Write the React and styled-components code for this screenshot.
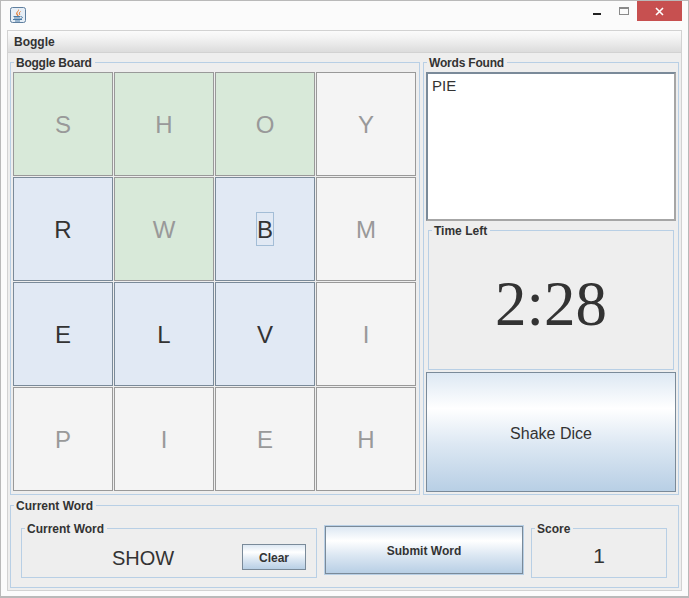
import * as React from "react";
import styled, { createGlobalStyle } from "styled-components";

const Global = createGlobalStyle`
  html, body {
    margin: 0;
    padding: 0;
    background: #fbfbfb;
  }
  * {
    box-sizing: border-box;
  }
`;

const Frame = styled.div`
  width: 689px;
  height: 598px;
  display: flex;
  flex-direction: column;
  background: #fbfbfb;
  border: 1px solid #b9b9b9;
  border-bottom-width: 2px;
  font-family: "Liberation Sans", Arial, sans-serif;
  color: #333333;
  overflow: hidden;
`;

const TitleBar = styled.div`
  height: 29px;
  flex: none;
  display: flex;
  align-items: flex-start;
  justify-content: space-between;
  padding-left: 9px;
`;

const AppIcon = styled.svg`
  width: 16px;
  height: 16px;
  margin-top: 6px;
`;

const WindowControls = styled.div`
  display: flex;
  align-items: flex-start;
  margin-right: 6px;
`;

const MinButton = styled.div`
  width: 8px;
  height: 2px;
  margin: 12px 18px 0 0;
  background: #222;
`;

const MaxButton = styled.div`
  width: 10px;
  height: 8px;
  margin: 6px 8px 0 0;
  border: 1px solid #8a8a8a;
  border-top-width: 2px;
`;

const CloseButton = styled.div`
  width: 45px;
  height: 20px;
  background: #c75050;
  display: flex;
  align-items: center;
  justify-content: center;
`;

const Content = styled.div`
  flex: 1;
  margin: 0 6px 5px 6px;
  border: 1px solid #d2d2d2;
  background: #eeeeee;
  display: flex;
  flex-direction: column;
  min-height: 0;
`;

const MenuBar = styled.div`
  height: 22px;
  flex: none;
  display: flex;
  align-items: center;
  padding-left: 6px;
  font-size: 12px;
  font-weight: bold;
  background: linear-gradient(#fbfbfb, #f4f4f4 30%, #dcdcdc);
  border-bottom: 1px solid #d2d2d2;
`;

const Body = styled.div`
  flex: 1;
  padding: 3px 2px 2px 2px;
  display: flex;
  flex-direction: column;
  gap: 4px;
  min-height: 0;
`;

const TopRow = styled.div`
  display: flex;
  gap: 3px;
`;

const Group = styled.fieldset`
  margin: 0;
  min-width: 0;
  border: 1px solid #b8cfe5;
  padding: ${(p) => p.$pad || "0"};
  width: ${(p) => p.$width || "auto"};
  flex: ${(p) => p.$flex || "none"};
`;

const Legend = styled.legend`
  margin-left: ${(p) => p.$offset || "3px"};
  padding: 1px 3px 0 2px;
  font-size: 12px;
  line-height: 12px;
  font-weight: bold;
  letter-spacing: ${(p) => p.$tight || "normal"};
`;

const Board = styled.div`
  display: grid;
  grid-template-columns: repeat(4, 100px);
  grid-auto-rows: 104px;
  gap: 1px;
`;

const Die = styled.div`
  display: flex;
  align-items: center;
  justify-content: center;
  padding-top: 2px;
  font-size: 24px;
  border: 1px solid ${(p) => (p.$state === "open" ? "#7a8a99" : "#999999")};
  color: ${(p) => (p.$state === "open" ? "#333333" : "#999999")};
  background: ${(p) =>
    p.$state === "open"
      ? "#e1e9f4"
      : p.$state === "used"
        ? "#d8e9d9"
        : "#f4f4f4"};
`;

const DieFocus = styled.span`
  display: block;
  margin-top: -2px;
  padding-top: 2px;
  line-height: 30px;
  border: 1px solid #a3bdd6;
`;

const SideColumn = styled.div`
  display: flex;
  flex-direction: column;
  align-items: center;
`;

const WordList = styled.div`
  width: 250px;
  height: 149px;
  padding: 2px 4px;
  font-size: 15px;
  line-height: 20px;
  background: #ffffff;
  border: 2px solid #7a8a99;
  border-right-color: #a6a6a6;
  border-bottom-color: #a6a6a6;
`;

const TimeGroup = styled(Group)`
  margin-top: 3px;
`;

const Clock = styled.div`
  height: 132px;
  display: flex;
  align-items: center;
  justify-content: center;
  padding-top: 3px;
  font-family: "Liberation Serif", "Times New Roman", serif;
  font-size: 63px;
`;

const GlossButton = styled.button`
  display: block;
  font-family: inherit;
  color: #333333;
  padding: ${(p) => p.$top || "2px"} 0 0;
  background: linear-gradient(#dde8f3, #ffffff 30%, #dde8f3 60%, #b8cfe5);
  border: 1px solid #7a8a99;
  width: ${(p) => p.$width};
  height: ${(p) => p.$height};
  font-size: ${(p) => p.$size};
  font-weight: ${(p) => p.$weight || "normal"};
  flex: none;
`;

const ShakeButton = styled(GlossButton)`
  margin-top: 2px;
`;

const BottomGroup = styled(Group)`
  padding: 10px 11px 9px 10px;
`;

const BottomRow = styled.div`
  display: flex;
  align-items: flex-start;
  gap: 7px;
`;

const WordRow = styled.div`
  height: 42px;
  display: flex;
  align-items: flex-start;
  justify-content: space-between;
  padding: 0 10px 0 90px;
`;

const WordText = styled.div`
  font-size: 20px;
  line-height: 24px;
  margin-top: 11px;
`;

const ClearSlot = styled.div`
  margin-top: 9px;
`;

const SubmitWrap = styled.div`
  flex: none;
  margin-top: 3px;
  padding: 1px;
  background: #b8cfe5;
`;

const ScoreValue = styled.div`
  height: 42px;
  display: flex;
  justify-content: center;
  font-size: 21px;
  line-height: 24px;
  padding-top: 9px;
`;

const rows = [
  [["S", "used"], ["H", "used"], ["O", "used"], ["Y", "idle"]],
  [["R", "open"], ["W", "used"], ["B", "open", true], ["M", "idle"]],
  [["E", "open"], ["L", "open"], ["V", "open"], ["I", "idle"]],
  [["P", "idle"], ["I", "idle"], ["E", "idle"], ["H", "idle"]],
];

export default function App() {
  return (
    <>
      <Global />
      <Frame>
        <TitleBar>
          <AppIcon viewBox="0 0 16 16">
            <rect x="0.5" y="0.5" width="15" height="15" rx="2" fill="#e6eef6" stroke="#5f7f9f" />
            <path d="M8.5 2 C10 4 6.5 5 7.5 7 C8 8 9 8.5 8.5 9.5 C7 8.5 5.5 7 6.5 5.5 C7.2 4.4 8.6 3.6 8.5 2Z" fill="#e2701f" />
            <path d="M10.5 4.5 C9 5.5 9 7 10 8" fill="none" stroke="#e2701f" />
            <path d="M3.5 9.5 H10 M4 11 H10 M3 12.5 H12 M5 14 H10" stroke="#4a7aa5" />
            <path d="M10.5 9.5 C13 9.5 13 11.5 10.5 11.5" fill="none" stroke="#4a7aa5" />
          </AppIcon>
          <WindowControls>
            <MinButton />
            <MaxButton />
            <CloseButton>
              <svg width="9" height="9" viewBox="0 0 9 9">
                <path d="M1 1 L8 8 M8 1 L1 8" stroke="#ffffff" strokeWidth="1.6" />
              </svg>
            </CloseButton>
          </WindowControls>
        </TitleBar>
        <Content>
          <MenuBar>Boggle</MenuBar>
          <Body>
            <TopRow>
              <Group $pad="3px 3px 2px 2px">
                <Legend $offset="1px" $tight="-0.25px">Boggle Board</Legend>
                <Board>
                  {rows.flat().map(([letter, state, focused], i) => (
                    <Die key={i} $state={state}>
                      {focused ? <DieFocus>{letter}</DieFocus> : letter}
                    </Die>
                  ))}
                </Board>
              </Group>
              <Group $flex="1" $pad="3px 2px 2px 2px">
                <Legend $offset="1px" $tight="-0.2px">Words Found</Legend>
                <SideColumn>
                  <WordList>PIE</WordList>
                  <TimeGroup $width="246px">
                    <Legend>Time Left</Legend>
                    <Clock>2:28</Clock>
                  </TimeGroup>
                  <ShakeButton $width="250px" $height="120px" $size="16px" $top="4px">
                    Shake Dice
                  </ShakeButton>
                </SideColumn>
              </Group>
            </TopRow>
            <BottomGroup>
              <Legend $offset="-7px">Current Word</Legend>
              <BottomRow>
                <Group $width="296px">
                  <Legend>Current Word</Legend>
                  <WordRow>
                    <WordText>SHOW</WordText>
                    <ClearSlot>
                      <GlossButton $width="64px" $height="26px" $size="12px" $weight="bold">
                        Clear
                      </GlossButton>
                    </ClearSlot>
                  </WordRow>
                </Group>
                <SubmitWrap>
                  <GlossButton $width="198px" $height="48px" $size="12px" $weight="bold">
                    Submit Word
                  </GlossButton>
                </SubmitWrap>
                <Group $width="136px">
                  <Legend>Score</Legend>
                  <ScoreValue>1</ScoreValue>
                </Group>
              </BottomRow>
            </BottomGroup>
          </Body>
        </Content>
      </Frame>
    </>
  );
}
